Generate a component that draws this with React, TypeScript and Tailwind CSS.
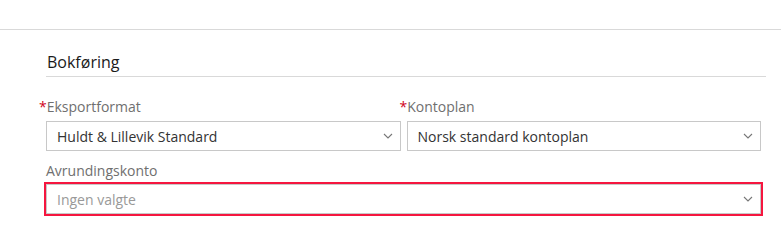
function Chevron() {
  return (
    <svg width="10" height="6" viewBox="0 0 10 6" className="shrink-0" fill="none">
      <path d="M1 1l4 4 4-4" stroke="#777" strokeWidth="1.1" />
    </svg>
  );
}

function Select({ value, placeholder }: { value?: string; placeholder?: string }) {
  return (
    <div className="flex h-[30px] items-center justify-between border border-[#c8c8c8] bg-white pl-[10px] pr-[7px]">
      <span className={value ? "text-[14px] text-[#333]" : "text-[14px] text-[#999]"}>
        {value ?? placeholder}
      </span>
      <Chevron />
    </div>
  );
}

function Label({ text, required }: { text: string; required?: boolean }) {
  return (
    <div className="h-[20px] text-[14px] leading-[20px] text-[#6f6f6f]">
      {required && <span className="-ml-[7px] text-[#d0021b]">*</span>}
      {text}
    </div>
  );
}

export default function App() {
  return (
    <div className="h-[250px] w-[781px] bg-white font-['Open_Sans',sans-serif]">
      <div className="h-[30px] border-b border-[#d9d9d9]" />
      <section className="pl-[46px] pr-[20px] pt-[21px]">
        <h2 className="-mr-[5px] border-b border-[#d9d9d9] pb-[3px] pl-[1px] text-[16px] font-medium leading-[22px] text-[#1a1a1a]">
          Bokføring
        </h2>
        <div className="mt-[20px] grid grid-cols-2 gap-x-[6px]">
          <div className="flex flex-col gap-[4px]">
            <Label text="Eksportformat" required />
            <Select value="Huldt & Lillevik Standard" />
          </div>
          <div className="flex flex-col gap-[4px]">
            <Label text="Kontoplan" required />
            <Select value="Norsk standard kontoplan" />
          </div>
        </div>
        <div className="mt-[10px] flex flex-col gap-[3px]">
          <Label text="Avrundingskonto" />
          <div className="outline-[2.5px] outline-[#f5163f]">
            <Select placeholder="Ingen valgte" />
          </div>
        </div>
      </section>
    </div>
  );
}
